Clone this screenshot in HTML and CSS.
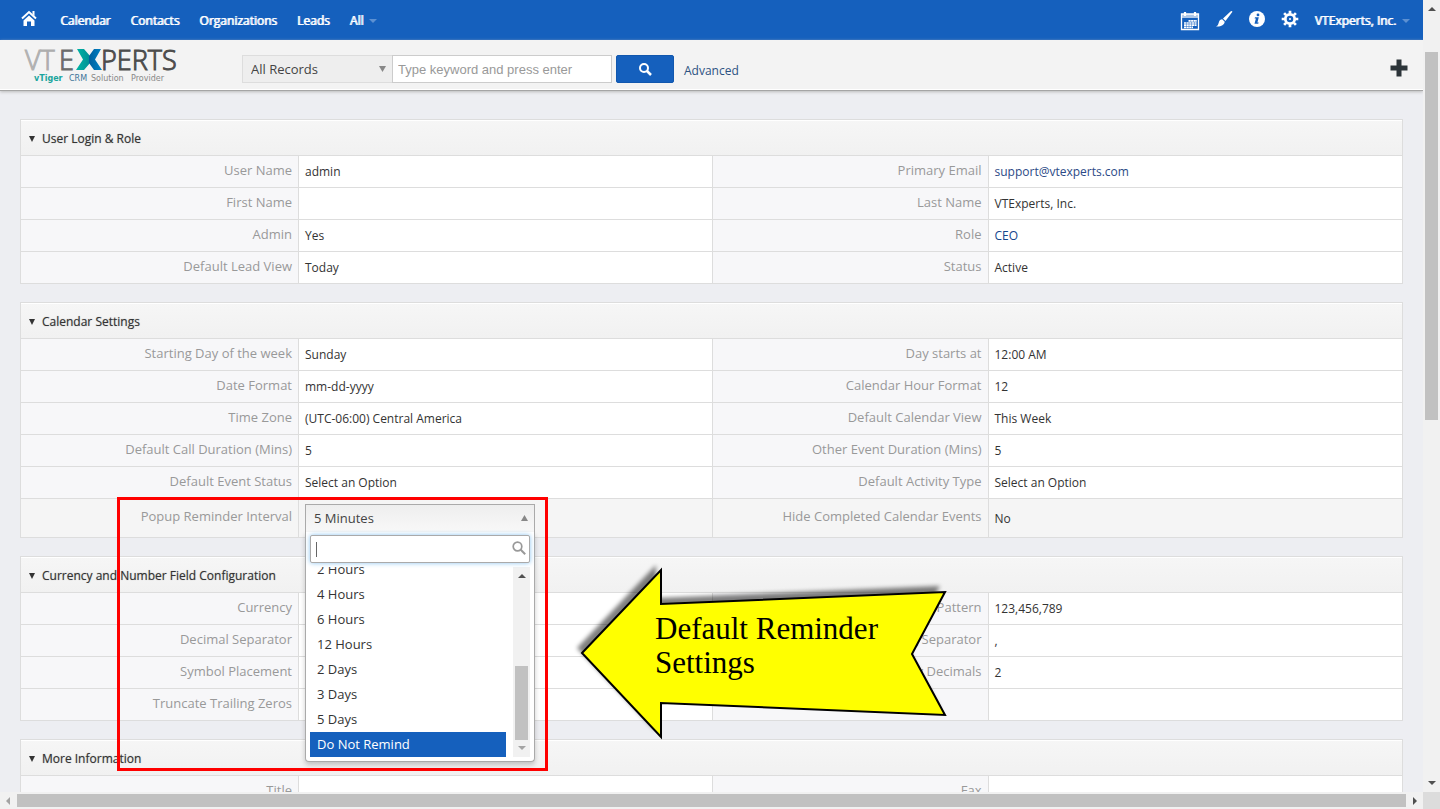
FILE: index.html
```html
<!DOCTYPE html>
<html lang="en">
<head>
	<meta charset="UTF-8">
	<title>VTExperts, Inc. - Calendar Settings</title>
	<link rel="stylesheet" href="styles.css">
</head>
<body>
<div class="window">
	<div class="view">
		<!-- top menu -->
		<nav class="navbar">
			<a href="#" class="home" aria-label="Home">
				<svg width="18" height="20" viewBox="0 0 18 20">
					<path d="M2 8.500 9 2l7 6.500" fill="none" stroke="#fff" stroke-width="2"/>
					<path d="M12.500 1h2v5l-2-2z" fill="#fff"/>
					<path d="M3.500 10.500 9 5.500l5.500 5V16H11v-4.500H7V16H3.500z" fill="#fff"/>
				</svg>
			</a>
			<a href="#">Calendar</a>
			<a href="#">Contacts</a>
			<a href="#">Organizations</a>
			<a href="#">Leads</a>
			<a href="#">All<i class="caret"></i></a>
			<div class="tools">
				<a href="#" aria-label="Calendar">
					<svg class="cal" width="20" height="20" viewBox="0 0 20 20">
						<path d="M1.500 3h17v15.500h-17z" fill="none" stroke="#fff" stroke-width="1.300"/>
						<path d="M1 3h18v4H1z" fill="#fff" opacity=".65"/>
						<path d="M5 1v4M15 1v4" stroke="#fff" stroke-width="2.200"/>
						<path d="M8.500 9.800H17M4 12h13M4 14.200h13M4 16.300h9" stroke="#fff" stroke-width="1.700" stroke-dasharray="2.200 .4"/>
					</svg>
				</a>
				<a href="#" aria-label="Themes">
					<svg width="18" height="20" viewBox="0 0 18 20">
						<path d="M17 1c.6.5.3 1-.1 1.600L10.500 11 8 8.600l7.500-7C16.100 1 16.600.7 17 1z" fill="#fff"/>
						<path d="M7.200 9.300 9.700 11.800C9.500 15 5.500 17 1 16.500c2-.7 2.200-2 2.800-4C4.300 10.500 5.600 9.300 7.200 9.300z" fill="#fff"/>
					</svg>
				</a>
				<a href="#" aria-label="Info">
					<svg width="18" height="20" viewBox="0 0 18 20">
						<circle cx="9" cy="9" r="8" fill="#fff"/>
						<circle cx="10" cy="4.900" r="1.400" fill="#1560bd"/>
						<path d="M7 7.300h3.800L9.400 12.500h1.300l-.5 1.300H6.500L7.900 8.600H6.600z" fill="#1560bd"/>
					</svg>
				</a>
				<a href="#" aria-label="Settings">
					<svg width="18" height="20" viewBox="0 0 18 20">
						<circle cx="9" cy="9" r="4.700" fill="none" stroke="#fff" stroke-width="2.800"/>
						<path d="M9 .7v3M9 14.300v3M.7 9h3M14.300 9h3M3.100 3.100l2 2M12.900 12.900l2 2M3.100 14.900l2-2M12.900 5.100l2-2" stroke="#fff" stroke-width="2.700"/>
						<circle cx="9" cy="9" r="1" fill="#fff"/>
					</svg>
				</a>
				<a href="#" class="user">VTExperts, Inc.<i class="caret"></i></a>
			</div>
		</nav>

		<!-- logo and global search -->
		<header class="searchbar">
			<a href="#" class="logo" aria-label="VTExperts">
				<svg width="158" height="46" viewBox="0 0 158 46">
					<defs>
						<linearGradient id="vt"><stop offset="0" stop-color="#c4c4c4"/><stop offset="1" stop-color="#999"/></linearGradient>
						<linearGradient id="teal"><stop offset="0" stop-color="#00b5a5"/><stop offset="1" stop-color="#008f94"/></linearGradient>
						<linearGradient id="blue"><stop offset="0" stop-color="#005f9e"/><stop offset="1" stop-color="#0083c6"/></linearGradient>
					</defs>
					<text x="2" y="28" class="brand" fill="url(#vt)" stroke="#b0b0b0">VT</text>
					<text x="36" y="28" class="brand" fill="#6b6b6b" stroke="#6b6b6b">E</text>
					<path d="M54 7h7l6 7v7l-6 7h-8l7-10.500z" fill="url(#teal)"/>
					<path d="M78 7h-7l-5 7v7l5 7h8l-7-10.500z" fill="url(#blue)"/>
					<text x="78" y="28" class="brand" fill="#4d4d4d" stroke="#4d4d4d">PERTS</text>
					<text x="11" y="39" class="tag"><tspan fill="#1aa59d" font-weight="bold">vTiger</tspan><tspan x="46" fill="#3d7499">CRM</tspan><tspan x="68" fill="#888">Solution</tspan><tspan x="108" fill="#888">Provider</tspan></text>
				</svg>
			</a>
			<form class="search">
				<select class="records" aria-label="Module"><option>All Records</option></select>
				<input type="text" class="keyword" aria-label="Keyword" placeholder="Type keyword and press enter">
				<button type="button" class="go" aria-label="Search">
					<svg width="14" height="14" viewBox="0 0 14 14"><circle cx="6" cy="6" r="4" fill="none" stroke="#fff" stroke-width="2"/><path d="M9 9l4 4" stroke="#fff" stroke-width="2.500"/></svg>
				</button>
				<a href="#" class="advanced">Advanced</a>
			</form>
			<button type="button" class="add" aria-label="Quick create">
				<svg width="18" height="18" viewBox="0 0 18 18"><path d="M9 .5v17M.5 9h17" stroke="#2c3439" stroke-width="5"/></svg>
			</button>
		</header>

		<main class="content">
			<table class="block">
				<colgroup><col class="c1"><col><col class="c3"><col></colgroup>
				<thead><tr><th colspan="4"><i class="toggle"></i>User Login &amp; Role</th></tr></thead>
				<tbody>
					<tr><th>User Name</th><td>admin</td><th>Primary Email</th><td><a href="#" class="mail">support@vtexperts.com</a></td></tr>
					<tr><th>First Name</th><td></td><th>Last Name</th><td>VTExperts, Inc.</td></tr>
					<tr><th>Admin</th><td>Yes</td><th>Role</th><td><a href="#">CEO</a></td></tr>
					<tr><th>Default Lead View</th><td>Today</td><th>Status</th><td>Active</td></tr>
				</tbody>
			</table>

			<table class="block">
				<colgroup><col class="c1"><col><col class="c3"><col></colgroup>
				<thead><tr><th colspan="4"><i class="toggle"></i>Calendar Settings</th></tr></thead>
				<tbody>
					<tr><th>Starting Day of the week</th><td>Sunday</td><th>Day starts at</th><td>12:00 AM</td></tr>
					<tr><th>Date Format</th><td>mm-dd-yyyy</td><th>Calendar Hour Format</th><td>12</td></tr>
					<tr><th>Time Zone</th><td>(UTC-06:00) Central America</td><th>Default Calendar View</th><td>This Week</td></tr>
					<tr><th>Default Call Duration (Mins)</th><td>5</td><th>Other Event Duration (Mins)</th><td>5</td></tr>
					<tr><th>Default Event Status</th><td>Select an Option</td><th>Default Activity Type</th><td>Select an Option</td></tr>
					<tr class="editing">
						<th><label for="interval">Popup Reminder Interval</label></th>
						<td>
							<div class="picker">
								<select id="interval" class="picked"><option>5 Minutes</option></select>
								<div class="drop">
									<div class="find">
										<input type="text" aria-label="Find interval">
										<i class="cursor"></i>
										<svg width="14" height="14" viewBox="0 0 14 14"><circle cx="5.500" cy="5.500" r="4.300" fill="none" stroke="#999" stroke-width="1.700"/><path d="M8.500 8.500l4.700 4.700" stroke="#999" stroke-width="2"/></svg>
									</div>
									<div class="results">
										<ul>
											<li>2 Hours</li>
											<li>4 Hours</li>
											<li>6 Hours</li>
											<li>12 Hours</li>
											<li>2 Days</li>
											<li>3 Days</li>
											<li>5 Days</li>
											<li class="active">Do Not Remind</li>
										</ul>
										<div class="bar list-bar"><i class="up"></i><b></b><i class="down off"></i></div>
									</div>
								</div>
								<!-- notes on top of the page -->
								<div class="frame"></div>
								<div class="note">
									<svg width="376" height="180" viewBox="0 0 376 180">
										<defs><filter id="soft" x="-10%" y="-10%" width="120%" height="120%"><feGaussianBlur stdDeviation="2"/></filter></defs>
										<path d="M5 87 84 4v33l284-12-33 62 33 61-284-12v34z" fill="#000" opacity=".5" filter="url(#soft)"/>
										<path d="M10 92 89 9v34l284-12-33 62 33 61-284-12v34z" fill="#ff0" stroke="#000" stroke-width="2"/>
									</svg>
									<p>Default Reminder<br>Settings</p>
								</div>
							</div>
						</td>
						<th>Hide Completed Calendar Events</th><td>No</td>
					</tr>
				</tbody>
			</table>

			<table class="block">
				<colgroup><col class="c1"><col><col class="c3"><col></colgroup>
				<thead><tr><th colspan="4"><i class="toggle"></i>Currency and Number Field Configuration</th></tr></thead>
				<tbody>
					<tr><th>Currency</th><td></td><th>Digit Grouping Pattern</th><td>123,456,789</td></tr>
					<tr><th>Decimal Separator</th><td></td><th>Digit Grouping Separator</th><td>,</td></tr>
					<tr><th>Symbol Placement</th><td></td><th>Number Of Currency Decimals</th><td>2</td></tr>
					<tr><th>Truncate Trailing Zeros</th><td></td><th></th><td></td></tr>
				</tbody>
			</table>

			<table class="block">
				<colgroup><col class="c1"><col><col class="c3"><col></colgroup>
				<thead><tr><th colspan="4"><i class="toggle"></i>More Information</th></tr></thead>
				<tbody>
					<tr><th>Title</th><td></td><th>Fax</th><td></td></tr>
				</tbody>
			</table>
		</main>
	</div>

	<!-- window scrollbars -->
	<div class="bar page-bar"><i class="up"></i><b></b><i class="down"></i></div>
	<div class="hbar"><i class="left"></i><b></b><i class="right"></i></div>
	<div class="corner"></div>
</div>
</body>
</html>
```
FILE: styles.css
```css
*{
	box-sizing: border-box;
}
body{
	margin: 0;
	font-family: "Open Sans", "Liberation Sans", sans-serif;
	font-size: 12px;
	color: #333;
	background: #edeef2;
}
a{
	color: #15468c;
	text-decoration: none;
}
select, input, button{
	margin: 0;
	font-family: inherit;
	border-radius: 0;
	outline: none;
}
.window{
	display: grid;
	grid-template-columns: minmax(0, 1fr) 17px;
	grid-template-rows: minmax(0, 1fr) 17px;
	height: 100vh;
}
.view{
	overflow: hidden;
}

/* top menu */
.navbar{
	display: flex;
	align-items: center;
	gap: 20px;
	height: 40px;
	padding: 0 13px 0 20px;
	background: #1560bd;
}
.navbar a{
	color: #fff;
	text-shadow: 1px 0 #fff;
	white-space: nowrap;
}
.navbar .home{
	margin-right: 2px;
}
.navbar svg{
	display: block;
}
.tools{
	display: flex;
	align-items: center;
	gap: 15px;
	margin-left: auto;
}
.navbar .cal{
	margin-top: 2px;
}
.caret{
	display: inline-block;
	margin-left: 6px;
	vertical-align: 2px;
	border: 4px solid transparent;
	border-top-color: #5c90d2;
	border-bottom: 0;
}

/* search bar */
.searchbar{
	display: flex;
	align-items: center;
	height: 51px;
	padding: 0 15px 0 23px;
	background: #f3f3f3;
	border-bottom: 1px solid #a5a5a5;
	box-shadow: inset 0 -1px #fff, 0 1px 3px #bbb;
}
.logo{
	width: 219px;
	flex: none;
}
.logo svg{
	display: block;
	overflow: visible;
}
.brand{
	font-family: "Open Sans", sans-serif;
	font-size: 27px;
	font-weight: 300;
	stroke-width: 1px;
}
.tag{
	font-family: "DejaVu Sans", sans-serif;
	font-size: 8px;
}
.search{
	display: flex;
	align-items: center;
	margin-top: 8px;
}
.records{
	width: 150px;
	height: 28px;
	padding: 0 8px;
	font-size: 13px;
	color: #444;
	appearance: none;
	border: 1px solid #ddd;
	border-right: 0;
	background: #eee url("data:image/svg+xml,%3Csvg xmlns='http://www.w3.org/2000/svg' width='7' height='6'%3E%3Cpath d='M0 0h7L3.5 6z' fill='%23888'/%3E%3C/svg%3E") no-repeat right 6px center;
}
.keyword{
	width: 220px;
	height: 28px;
	padding: 0 5px;
	font: 13px "Liberation Sans", sans-serif;
	border: 1px solid #ccc;
	background: #fff;
}
.keyword::placeholder{
	color: #999;
}
.go{
	display: flex;
	align-items: center;
	justify-content: center;
	width: 58px;
	height: 28px;
	margin-left: 4px;
	padding: 0;
	border: 1px solid #1157ae;
	border-radius: 2px;
	background: #1560bd;
}
.advanced{
	margin-left: 10px;
	padding-top: 2px;
	color: #2c5282;
}
.add{
	margin: 6px 0 0 auto;
	padding: 0;
	border: 0;
	background: none;
}
.add svg{
	display: block;
}

/* detail blocks */
.content{
	padding: 28px 20px;
}
.block{
	width: 100%;
	margin-bottom: 18px;
	table-layout: fixed;
	border-collapse: separate;
	border-spacing: 0;
	border: 1px solid #ddd;
	border-bottom: 0;
	background: #fff;
}
.c1{
	width: 278px;
}
.c3{
	width: 276px;
}
.block th, .block td{
	height: 32px;
	padding: 0 6px;
	border-bottom: 1px solid #ddd;
	font-weight: normal;
}
.block thead th{
	height: 36px;
	padding: 2px 0 0 8px;
	text-align: left;
	color: #333;
	text-shadow: 0 0 1px #999;
	background: linear-gradient(#f6f6f6, #f1f1f1);
	box-shadow: inset 0 1px #fff;
}
.block tbody th{
	padding-bottom: 4px;
	text-align: right;
	font-size: 13px;
	line-height: 16px;
	color: #999;
	background: #f7f7f9;
	border-right: 1px solid #ddd;
}
.block tbody td:nth-child(2){
	border-right: 1px solid #ddd;
}
.mail{
	color: #2c4a86;
}
.toggle{
	display: inline-block;
	margin-right: 7px;
	vertical-align: 1px;
	border: 3px solid transparent;
	border-top: 6px solid #333;
	border-bottom: 0;
}
.block .editing th, .block .editing td{
	height: 39px;
	background: #f5f5f5;
}

/* opened interval list */
.picker{
	position: relative;
	width: 230px;
	height: 28px;
}
.picked{
	display: block;
	width: 230px;
	height: 28px;
	padding: 0 8px 1px;
	font-size: 13px;
	color: #444;
	appearance: none;
	border: 1px solid #aaa;
	border-bottom: 0;
	background: url("data:image/svg+xml,%3Csvg xmlns='http://www.w3.org/2000/svg' width='7' height='6'%3E%3Cpath d='M0 6h7L3.5 0z' fill='%23888'/%3E%3C/svg%3E") no-repeat right 6px top 10px, linear-gradient(#eee, #f8f8f8);
}
.drop{
	position: absolute;
	z-index: 2;
	top: 28px;
	left: 0;
	width: 230px;
	padding: 3px 4px 4px;
	border: 1px solid #aaa;
	border-top: 0;
	border-radius: 0 0 4px 4px;
	background: #fff;
	box-shadow: 0 3px 5px rgba(0, 0, 0, .2);
}
.find{
	position: relative;
}
.find input{
	display: block;
	width: 100%;
	height: 28px;
	padding: 0 20px 0 6px;
	font-size: 13px;
	border: 1px solid #aaa;
	border-radius: 2px;
	box-shadow: 0 0 5px #8bc4f0;
}
.cursor{
	position: absolute;
	top: 7px;
	left: 6px;
	height: 15px;
	border-left: 1px solid #666;
}
.find svg{
	position: absolute;
	top: 6px;
	right: 4px;
}
.results{
	display: flex;
	justify-content: space-between;
	height: 190px;
	margin-top: 4px;
	overflow: hidden;
}
.results ul{
	align-self: flex-end;
	width: 196px;
	margin: 0;
	padding: 0;
	list-style: none;
}
.results li{
	height: 25px;
	padding: 0 7px;
	font-size: 13px;
	line-height: 25px;
}
.results .active{
	color: #fff;
	background: #1560bd;
}

/* red frame and callout arrow */
.frame{
	position: absolute;
	z-index: 1;
	top: -7px;
	left: -188px;
	width: 431px;
	height: 274px;
	border: 3px solid #f00;
	pointer-events: none;
}
.note{
	position: absolute;
	z-index: 3;
	top: 57px;
	left: 267px;
}
.note svg{
	display: block;
}
.note p{
	position: absolute;
	top: 51px;
	left: 83px;
	margin: 0;
	font: 31px/34px "Liberation Serif", serif;
	color: #000;
	white-space: nowrap;
}

/* scrollbars */
.bar, .hbar{
	display: flex;
	align-items: center;
	background: #f1f1f1;
}
.bar{
	flex-direction: column;
	width: 17px;
	padding: 7px 0;
}
.bar b, .hbar b{
	background: #c1c1c1;
}
.bar b{
	width: 13px;
}
.page-bar b{
	height: 368px;
	margin-top: 41px;
}
.list-bar b{
	height: 74px;
	margin-top: auto;
}
.up, .down, .left, .right{
	border: 4px solid transparent;
}
.up{
	border-top: 0;
	border-bottom-color: #505050;
}
.down{
	margin-top: auto;
	border-bottom: 0;
	border-top-color: #505050;
}
.off{
	margin-top: 6px;
	border-top-color: #a3a3a3;
}
.left{
	border-left: 0;
	border-right-color: #a3a3a3;
}
.right{
	border-right: 0;
	border-left-color: #505050;
}
.hbar{
	gap: 7px;
	padding: 0 6px;
}
.hbar b{
	flex: 1;
	height: 13px;
}
.corner{
	background: #dcdcdc;
}
```
